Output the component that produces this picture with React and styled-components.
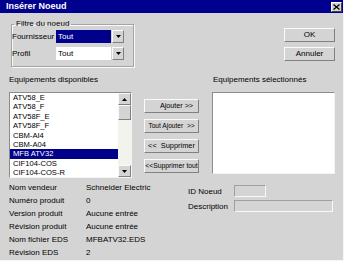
import React from "react";
import styled, { createGlobalStyle } from "styled-components";

const GlobalStyle = createGlobalStyle`
  html, body {
    margin: 0;
    padding: 0;
    background: #d4d4d4;
  }
  body {
    font-family: "Liberation Sans", Arial, sans-serif;
  }
`;

const Dialog = styled.div`
  width: 344px;
  height: 261px;
  box-sizing: border-box;
  background: #d4d4d4;
  border-right: 1px solid #f6f6f6;
  border-bottom: 1px solid #f6f6f6;
  font-size: 8px;
  color: #000;
  display: flex;
  flex-direction: column;
  overflow: hidden;
`;

const TitleBar = styled.div`
  height: 13px;
  flex-shrink: 0;
  background: #00008e;
  display: flex;
  align-items: center;
  justify-content: space-between;
  padding: 0 1px 0 6px;
`;

const Title = styled.span`
  color: #fff;
  font-weight: bold;
  font-size: 9px;
  line-height: 13px;
`;

const CloseBtn = styled.div`
  width: 11px;
  height: 10px;
  box-sizing: border-box;
  background: #d4d4d4;
  border: 1px solid;
  border-color: #fff #404040 #404040 #fff;
  display: flex;
  align-items: center;
  justify-content: center;
`;

const TopRow = styled.div`
  display: flex;
  justify-content: space-between;
  align-items: flex-start;
  padding: 6px 8px 0 11px;
`;

const GroupBox = styled.fieldset`
  margin: 0;
  width: 123px;
  min-width: 0;
  box-sizing: border-box;
  padding: 1px 0 6px 0;
  border: 1px solid #a4a4a4;
  box-shadow: inset 1px 1px 0 #fafafa, 1px 1px 0 #fafafa;
`;

const Legend = styled.legend`
  margin-left: 2px;
  padding: 0 2px;
  font-size: 8px;
  line-height: 10px;
`;

const FieldRow = styled.div`
  display: flex;
  align-items: center;
  height: 13px;
  & + & {
    margin-top: 4px;
  }
`;

const FieldLabel = styled.span`
  width: ${p => p.$w}px;
  flex-shrink: 0;
  line-height: 13px;
  white-space: nowrap;
`;

const ComboField = styled.div`
  width: 55px;
  height: 13px;
  box-sizing: border-box;
  padding-left: 2px;
  line-height: 13px;
  background: ${p => (p.$active ? "#00008a" : "#fff")};
  color: ${p => (p.$active ? "#fff" : "#000")};
  margin-right: 1px;
`;

const RaisedBox = styled.div`
  width: ${p => p.$w}px;
  height: ${p => p.$h}px;
  flex-shrink: 0;
  box-sizing: border-box;
  background: #d4d4d4;
  border: 1px solid;
  border-color: #fafafa #808080 #808080 #fafafa;
  display: flex;
  align-items: center;
  justify-content: center;
`;

const ButtonStack = styled.div`
  display: flex;
  flex-direction: column;
  gap: ${p => p.$gap}px;
  margin-top: ${p => p.$top}px;
`;

const Button = styled.button`
  width: ${p => p.$w}px;
  height: 14px;
  box-sizing: border-box;
  padding: 0;
  margin: 0;
  font-family: "Liberation Sans", Arial, sans-serif;
  font-size: ${p => p.$fs || 8}px;
  line-height: 12px;
  color: #000;
  background: #d4d4d4;
  border: 1px solid;
  border-color: #fafafa #808080 #808080 #fafafa;
  white-space: nowrap;
  overflow: hidden;
  text-align: center;
  padding-left: ${p => p.$pl || 0}px;
`;

const Middle = styled.div`
  display: flex;
  align-items: flex-start;
  margin-top: 8px;
  padding: 0 8px 0 9px;
`;

const Column = styled.div`
  width: ${p => p.$w}px;
  margin-left: ${p => p.$ml || 0}px;
  display: flex;
  flex-direction: column;
`;

const ColLabel = styled.div`
  height: 10px;
  line-height: 10px;
  margin-bottom: 7px;
  padding-left: ${p => p.$pl || 0}px;
  white-space: nowrap;
`;

const ListBox = styled.div`
  height: ${p => p.$h}px;
  box-sizing: border-box;
  background: #fff;
  border: 1px solid;
  border-color: #8c8c8c #f4f4f4 #f4f4f4 #8c8c8c;
  display: flex;
  overflow: hidden;
`;

const Items = styled.div`
  flex: 1;
  overflow: hidden;
`;

const Item = styled.div`
  height: 9.4px;
  line-height: 9.4px;
  font-size: 7.6px;
  padding-left: 3px;
  white-space: nowrap;
  background: ${p => (p.$selected ? "#00008a" : "transparent")};
  color: ${p => (p.$selected ? "#fff" : "#000")};
`;

const ScrollBar = styled.div`
  width: 13px;
  display: flex;
  flex-direction: column;
`;

const Track = styled.div`
  flex: 1;
  background: #f3f3ee;
`;

const Bottom = styled.div`
  display: flex;
  align-items: flex-start;
  margin-top: 3px;
  padding-left: 9px;
`;

const InfoGrid = styled.div`
  width: 179px;
  display: grid;
  grid-template-columns: 77px auto;
  grid-auto-rows: 13px;
  align-items: center;
  white-space: nowrap;
`;

const FormGrid = styled.div`
  margin-top: 4px;
  display: grid;
  grid-template-columns: 46px auto;
  grid-auto-rows: 12px;
  row-gap: 3px;
  align-items: center;
  white-space: nowrap;
`;

const InputBox = styled.div`
  width: ${p => p.$w}px;
  height: 12px;
  box-sizing: border-box;
  border: 1px solid;
  border-color: #a0a0a0 #f8f8f8 #f8f8f8 #a0a0a0;
  background: #d4d4d4;
`;

const Arrow = ({ up }) => (
  <svg width="5" height="3" viewBox="0 0 5 3">
    <polygon points={up ? "0,3 5,3 2.5,0" : "0,0 5,0 2.5,3"} fill="#000" />
  </svg>
);

const Combo = ({ value, active }) => (
  <>
    <ComboField $active={active}>{value}</ComboField>
    <RaisedBox $w={12} $h={13}>
      <Arrow />
    </RaisedBox>
  </>
);

const available = [
  "ATV58_E",
  "ATV58_F",
  "ATV58F_E",
  "ATV58F_F",
  "CBM-AI4",
  "CBM-A04",
  "MFB ATV32",
  "CIF104-COS",
  "CIF104-COS-R",
];

const info = [
  ["Nom vendeur", "Schneider Electric"],
  ["Numéro produit", "0"],
  ["Version produit", "Aucune entrée"],
  ["Révision produit", "Aucune entrée"],
  ["Nom fichier EDS", "MFBATV32.EDS"],
  ["Révision EDS", "2"],
];

export default function App() {
  return (
    <>
      <GlobalStyle />
      <Dialog>
        <TitleBar>
          <Title>Insérer Noeud</Title>
          <CloseBtn>
            <svg width="7" height="6" viewBox="0 0 7 6">
              <path d="M0.5 0.5 L6.5 5.5 M6.5 0.5 L0.5 5.5" stroke="#000" strokeWidth="1.3" />
            </svg>
          </CloseBtn>
        </TitleBar>

        <TopRow>
          <GroupBox>
            <Legend>Filtre du noeud</Legend>
            <FieldRow>
              <FieldLabel $w={44}>Fournisseur</FieldLabel>
              <Combo value="Tout" active />
            </FieldRow>
            <FieldRow>
              <FieldLabel $w={44}>Profil</FieldLabel>
              <Combo value="Tout" />
            </FieldRow>
          </GroupBox>
          <ButtonStack $gap={5} $top={9}>
            <Button $w={51}>OK</Button>
            <Button $w={51}>Annuler</Button>
          </ButtonStack>
        </TopRow>

        <Middle>
          <Column $w={123}>
            <ColLabel>Equipements disponibles</ColLabel>
            <ListBox $h={86}>
              <Items>
                {available.map(name => (
                  <Item key={name} $selected={name === "MFB ATV32"}>
                    {name}
                  </Item>
                ))}
              </Items>
              <ScrollBar>
                <RaisedBox $w={13} $h={12}>
                  <Arrow up />
                </RaisedBox>
                <RaisedBox $w={13} $h={15} />
                <Track />
                <RaisedBox $w={13} $h={12}>
                  <Arrow />
                </RaisedBox>
              </ScrollBar>
            </ListBox>
          </Column>

          <Column $w={55} $ml={12}>
            <ButtonStack $gap={6} $top={24}>
              <Button $w={55} $fs={7.2} $pl={10}>Ajouter &gt;&gt;</Button>
              <Button $w={55} $fs={6.6}>Tout Ajouter &nbsp;&gt;&gt;</Button>
              <Button $w={55} $fs={7.4}>&lt;&lt; &nbsp;Supprimer</Button>
              <Button $w={55} $fs={6.8}>&lt;&lt;Supprimer tout</Button>
            </ButtonStack>
          </Column>

          <Column $w={123} $ml={13}>
            <ColLabel $pl={1}>Equipements sélectionnés</ColLabel>
            <ListBox $h={82} />
          </Column>
        </Middle>

        <Bottom>
          <InfoGrid>
            {info.map(([label, value]) => (
              <React.Fragment key={label}>
                <span>{label}</span>
                <span>{value}</span>
              </React.Fragment>
            ))}
          </InfoGrid>
          <FormGrid>
            <span>ID Noeud</span>
            <InputBox $w={32} />
            <span>Description</span>
            <InputBox $w={99} />
          </FormGrid>
        </Bottom>
      </Dialog>
    </>
  );
}
